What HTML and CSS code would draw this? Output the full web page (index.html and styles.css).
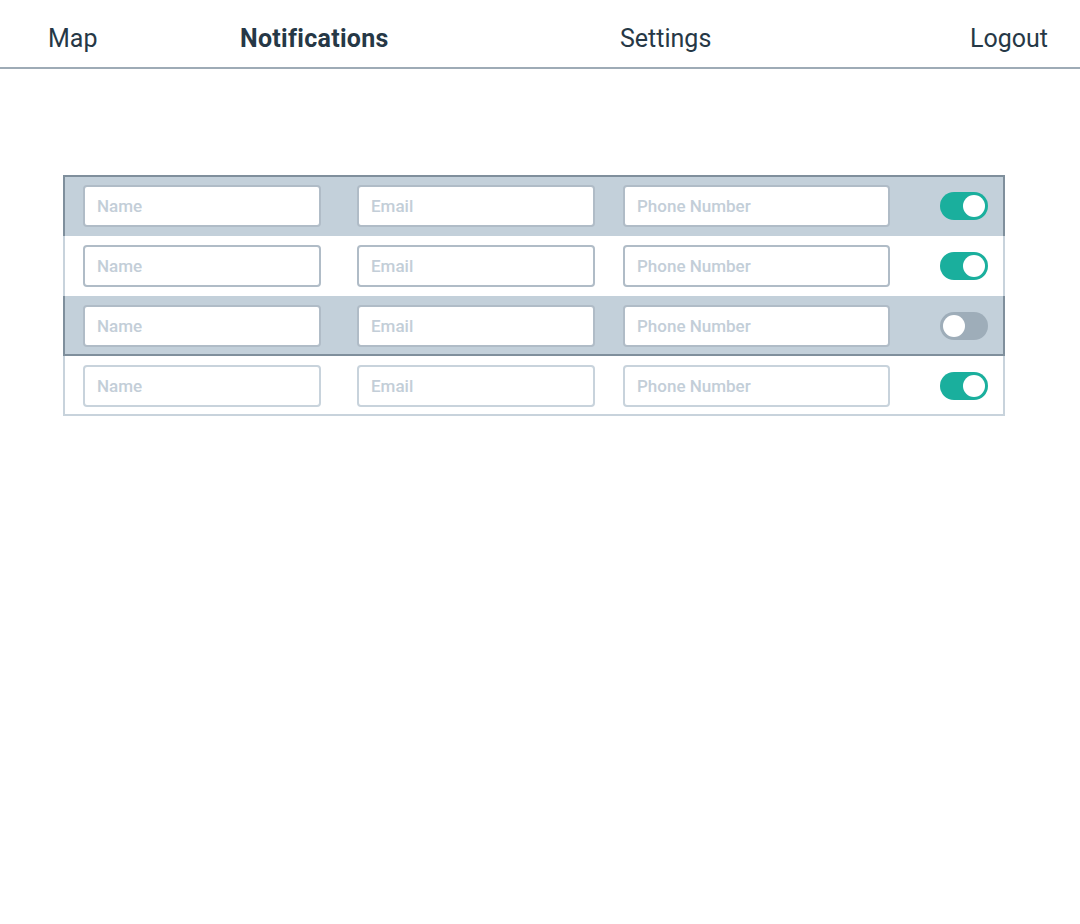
FILE: index.html
```html
<!DOCTYPE html>
<html lang="en">
<head>
<meta charset="utf-8">
<title>Notifications</title>
<link rel="stylesheet" href="styles.css">
</head>
<body>
<nav class="nav">
  <a class="nav-item" href="#">Map</a>
  <a class="nav-item active" href="#">Notifications</a>
  <a class="nav-item" href="#">Settings</a>
  <a class="nav-item logout" href="#">Logout</a>
</nav>
<main class="content">
  <div class="contacts">
    <div class="row selected first">
      <input class="field" type="text" placeholder="Name">
      <input class="field" type="text" placeholder="Email">
      <input class="field phone" type="text" placeholder="Phone Number">
      <span class="toggle on"><span class="knob"></span></span>
    </div>
    <div class="row">
      <input class="field" type="text" placeholder="Name">
      <input class="field" type="text" placeholder="Email">
      <input class="field phone" type="text" placeholder="Phone Number">
      <span class="toggle on"><span class="knob"></span></span>
    </div>
    <div class="row selected">
      <input class="field" type="text" placeholder="Name">
      <input class="field" type="text" placeholder="Email">
      <input class="field phone" type="text" placeholder="Phone Number">
      <span class="toggle"><span class="knob"></span></span>
    </div>
    <div class="row last">
      <input class="field light" type="text" placeholder="Name">
      <input class="field light" type="text" placeholder="Email">
      <input class="field phone light" type="text" placeholder="Phone Number">
      <span class="toggle on"><span class="knob"></span></span>
    </div>
  </div>
</main>
</body>
</html>
```
FILE: styles.css
```css
* { box-sizing: border-box; }
html, body { margin: 0; padding: 0; background: #ffffff; }
body {
  font-family: Roboto, "Liberation Sans", sans-serif;
  color: #263846;
}
.nav {
  display: grid;
  grid-template-columns: 192px 380px 1fr auto;
  align-items: center;
  height: 69px;
  padding: 0 32px 2px 48px;
  border-bottom: 2px solid #9eabb6;
}
.nav-item {
  font-size: 25px;
  color: #263846;
  text-decoration: none;
  line-height: 1;
  padding-top: 12px;
}
.nav-item.active { font-weight: 700; letter-spacing: 0.3px; }
.content { padding: 106px 75px 0 63px; }
.contacts {
  width: 942px;
  border: 2px solid #c8d3dc;
  border-top: none;
}
.row {
  display: grid;
  grid-template-columns: 274px 266px 317px 48px;
  align-items: start;
  height: 60px;
  padding: 9px 0 0 18px;
  margin: 0 -2px;
  border-left: 2px solid #c8d3dc;
  border-right: 2px solid #c8d3dc;
}
.row.first { height: 61px; border-top: 2px solid #7f8f9c; padding-top: 8px; }
.row.selected {
  background: #c3d0da;
  border-left-color: #7f8f9c;
  border-right-color: #7f8f9c;
}
.row.selected:not(.first) { border-bottom: 2px solid #7f8f9c; }
.row.last { border-left-color: transparent; border-right-color: transparent; height: 58px; }
.field {
  width: 238px;
  height: 42px;
  border: 2px solid #b0bcc7;
  border-radius: 4px;
  background: #ffffff;
  padding: 0 12px;
  font-family: Roboto, "Liberation Sans", sans-serif;
  font-size: 17px;
  font-weight: 500;
  color: #263846;
  outline: none;
}
.field.light { border-color: #c8d3dc; }
.field.phone { width: 267px; }
.field::placeholder { color: #c3ced8; }
.toggle {
  position: relative;
  display: block;
  width: 48px;
  height: 28px;
  margin-top: 7px;
  border-radius: 14px;
  background: #9eadb9;
}
.toggle .knob {
  position: absolute;
  top: 3px;
  left: 3px;
  width: 22px;
  height: 22px;
  border-radius: 50%;
  background: #ffffff;
}
.toggle.on { background: #1aaf9d; }
.toggle.on .knob { left: 23px; }
```
